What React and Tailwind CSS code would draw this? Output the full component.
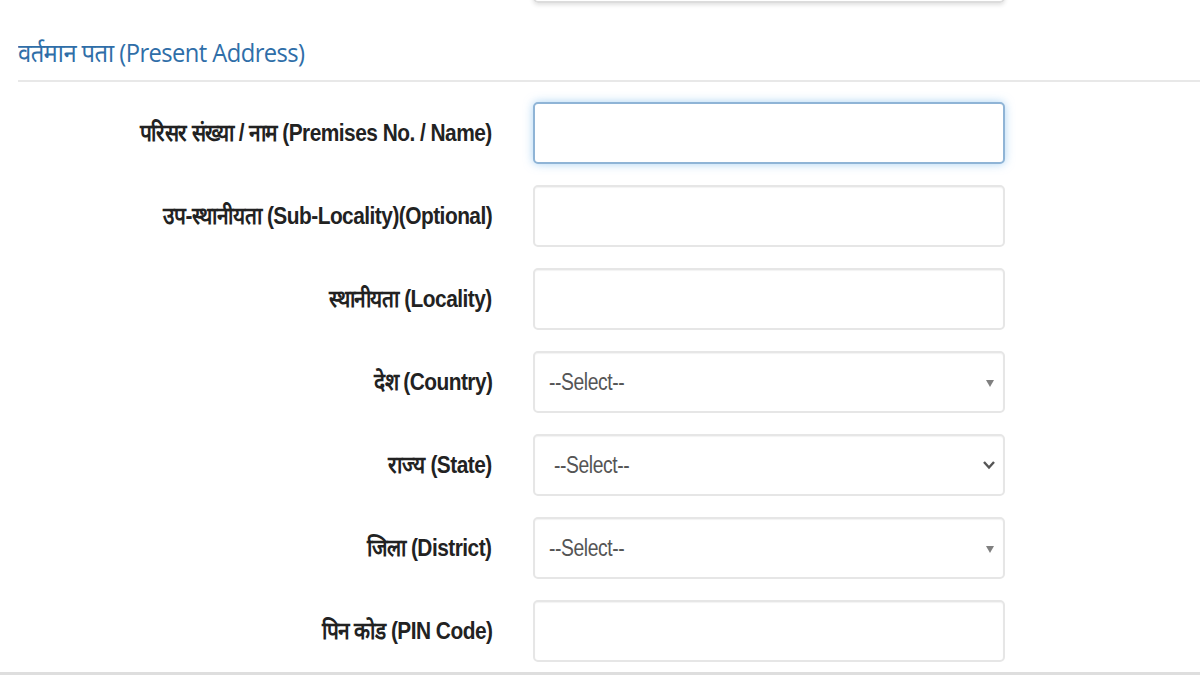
import React from "react";

const rows = [
  { label: "परिसर संख्या / नाम (Premises No. / Name)", type: "input", focus: true },
  { label: "उप-स्थानीयता (Sub-Locality)(Optional)", type: "input" },
  { label: "स्थानीयता (Locality)", type: "input" },
  { label: "देश (Country)", type: "select", arrow: "tri", pad: "pl-[14px]" },
  { label: "राज्य (State)", type: "select", arrow: "chev", pad: "pl-[19px]" },
  { label: "जिला (District)", type: "select", arrow: "tri", pad: "pl-[14px]" },
  { label: "पिन कोड (PIN Code)", type: "input" },
];

function Field({ r }) {
  const base =
    "w-[472px] h-[62px] rounded-[5px] bg-white flex items-center";
  const border = r.focus
    ? "border-2 border-[#8fb4d6] shadow-[0_0_10px_rgba(102,175,233,0.55)]"
    : "border-2 border-[#e6e6e6] shadow-[inset_0_1px_1px_rgba(0,0,0,0.05)]";
  if (r.type === "input") return <div className={`${base} ${border}`} />;
  return (
    <div className={`${base} ${border} ${r.pad} pr-[8px] justify-between`}>
      <span className="text-[23px] text-[#555] tracking-[-0.5px] font-['Liberation_Sans_Narrow','Liberation_Sans',sans-serif] scale-x-[0.84] origin-left">
        --Select--
      </span>
      {r.arrow === "tri" ? (
        <svg width="8" height="7" viewBox="0 0 8 7" className="mt-[3px] mr-[1px]">
          <path d="M0 0 L8 0 L4 7 Z" fill="#808080" />
        </svg>
      ) : (
        <svg width="14" height="10" viewBox="0 0 14 10" className="mr-[-1px]">
          <path d="M2 2 L7 7.5 L12 2" fill="none" stroke="#555" strokeWidth="2.4" />
        </svg>
      )}
    </div>
  );
}

export default function App() {
  return (
    <div className="w-[1200px] h-[675px] bg-white overflow-hidden flex flex-col font-['Liberation_Sans',sans-serif]">
      <div className="ml-[533px] w-[472px] h-[62px] -mt-[59px] shrink-0 rounded-[5px] border-2 border-[#dcdcdc] shadow-[0_2px_4px_rgba(0,0,0,0.12)]" />
      <h2 className="ml-[18px] mt-[33px] h-[32px] text-[25px] leading-[32px] text-[#2f6ea8] font-['Open_Sans','Noto_Sans',sans-serif] tracking-[-0.6px] whitespace-nowrap scale-x-[0.95] origin-left">
        वर्तमान पता (Present Address)
      </h2>
      <div className="ml-[18px] mt-[12px] h-[2px] bg-[#e8e8e8] shrink-0" />
      <div className="mt-[20px] flex flex-col gap-[21px]">
        {rows.map((r, i) => (
          <div key={i} className="flex items-center">
            <div className="w-[492px] flex justify-end pr-0">
              <span className="text-[24px] font-bold text-[#222] whitespace-nowrap tracking-[-0.6px] scale-x-[0.87] origin-right font-['Liberation_Sans_Narrow','Liberation_Sans',sans-serif]">
                {r.label}
              </span>
            </div>
            <div className="ml-[41px]">
              <Field r={r} />
            </div>
          </div>
        ))}
      </div>
      <div className="mt-auto h-[3px] bg-[#dedede] shrink-0" />
    </div>
  );
}
